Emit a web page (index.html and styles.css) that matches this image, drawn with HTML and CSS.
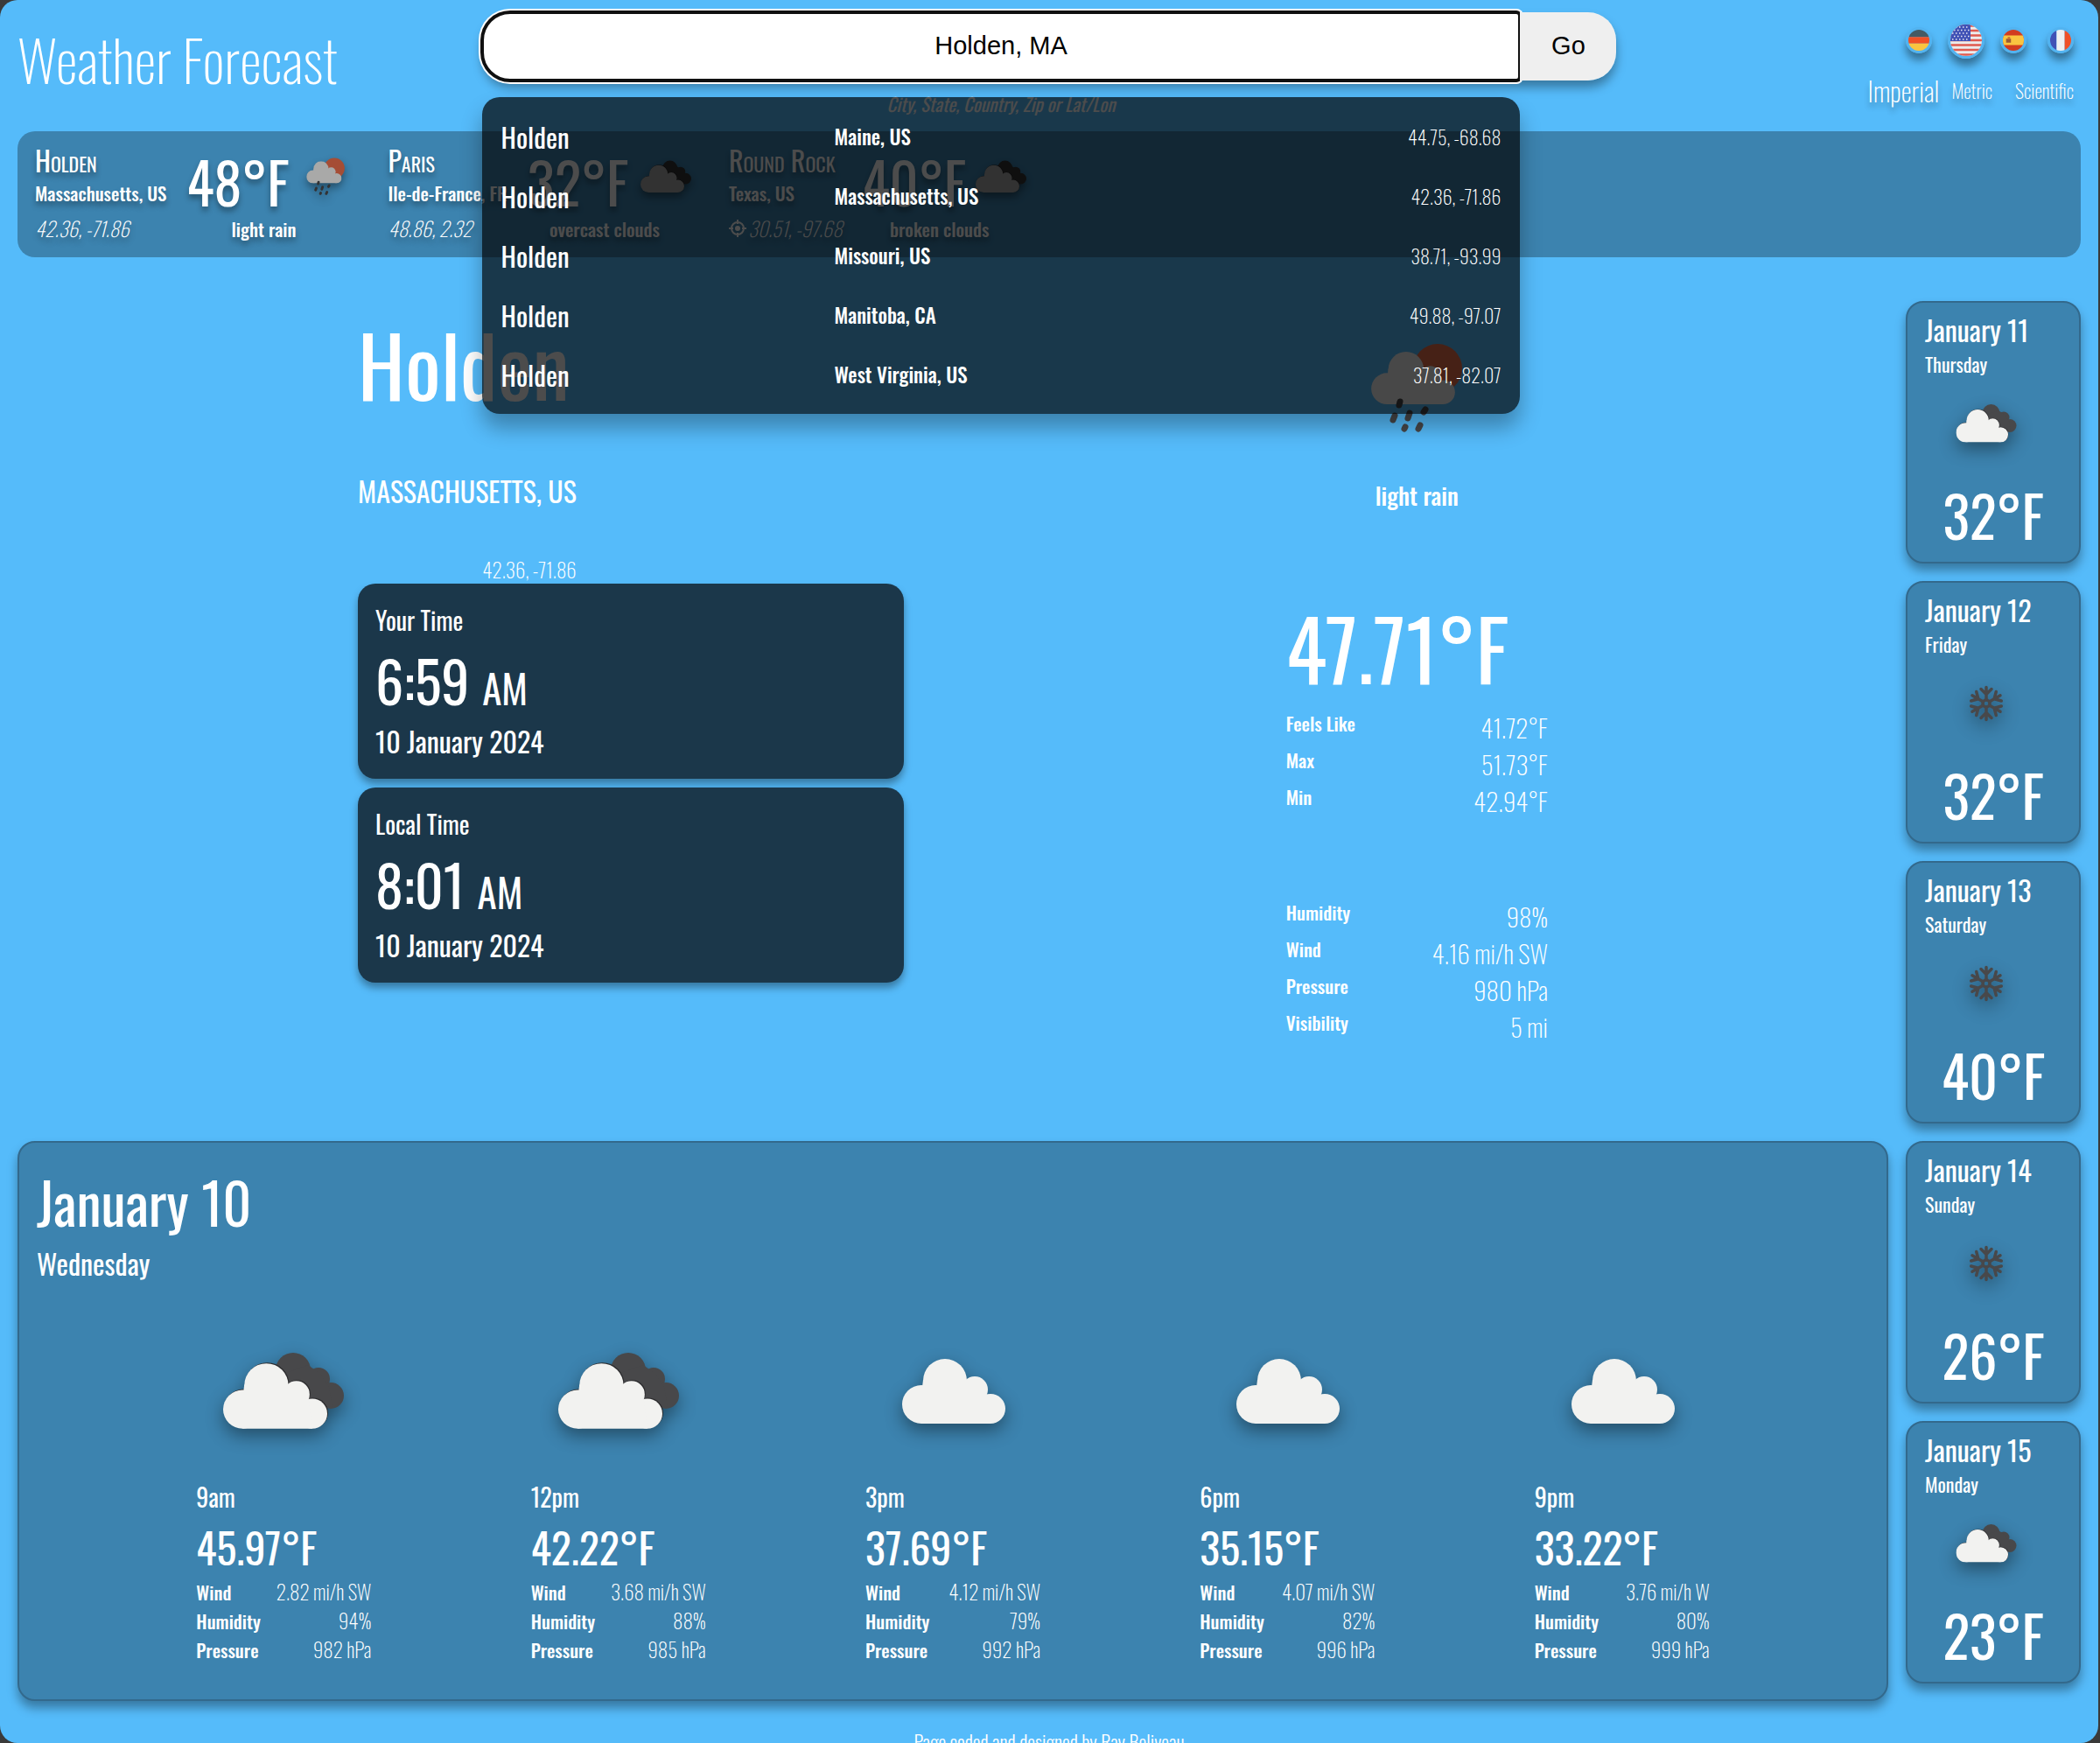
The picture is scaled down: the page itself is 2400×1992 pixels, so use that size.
FILE: index.html
```html
<!DOCTYPE html>
<html lang="en">
<head>
<meta charset="utf-8">
<meta name="viewport" content="width=device-width, initial-scale=1">
<title>Weather Forecast</title>
<link rel="stylesheet" href="styles.css">
</head>
<body>
<svg class="sprite" aria-hidden="true">
  <symbol id="cloud-shape" viewBox="0 0 118 74">
    <circle cx="22" cy="52" r="22"/><circle cx="49" cy="25" r="25"/><circle cx="83" cy="35" r="15"/><circle cx="101" cy="57" r="17"/>
    <path d="M22 74L22 40L24 24L72 24L85 36L97 42L101 74Z"/>
  </symbol>
  <symbol id="clouds" viewBox="0 0 200 200">
    <g fill="#48484a"><circle cx="111" cy="76" r="20"/><circle cx="140" cy="86" r="13"/><circle cx="154" cy="105" r="15"/><path d="M100 80L128 70L142 80L152 95L156 118L120 112Z"/></g>
    <use href="#cloud-shape" x="32" y="67" width="119" height="75" fill="#2c2c2e"/>
    <use href="#cloud-shape" x="31" y="68" width="119" height="75" fill="#f2f2f0"/>
  </symbol>
  <symbol id="cloud" viewBox="0 0 200 200">
    <use href="#cloud-shape" x="42" y="63" width="118" height="74" fill="#f2f2f0"/>
  </symbol>
  <symbol id="rain" viewBox="0 0 200 200">
    <circle cx="124" cy="77" r="28" fill="#ec6e4c"/>
    <use href="#cloud-shape" x="48" y="58" width="96" height="60" fill="#f2f2f0"/>
    <path d="M81 115L80 119M75 131L73 136M92 128L90 134M110 124L108 127M87 144L86 146M104 142L102 146" stroke="#48484a" stroke-width="7" stroke-linecap="round"/>
  </symbol>
  <symbol id="snow" viewBox="0 0 200 200">
    <g stroke="#48484a" stroke-width="7" stroke-linecap="round" fill="none">
      <circle cx="100" cy="100" r="8"/>
      <g id="arm"><path d="M100 91V63M88 67L100 79L112 67"/></g>
      <use href="#arm" transform="rotate(60 100 100)"/><use href="#arm" transform="rotate(120 100 100)"/>
      <use href="#arm" transform="rotate(180 100 100)"/><use href="#arm" transform="rotate(240 100 100)"/>
      <use href="#arm" transform="rotate(300 100 100)"/>
    </g>
  </symbol>
</svg>

<div class="page">
  <header class="header">
    <h1 class="title">Weather Forecast</h1>
    <form class="search" role="search">
      <div class="search-row">
        <input class="search-input" type="text" value="Holden, MA" aria-label="Location">
        <button class="search-button" type="button">Go</button>
      </div>
      <p class="hint">City, State, Country, Zip or Lat/Lon</p>
      <ul class="suggestions">
        <li><button class="suggestion" type="button"><span class="s-name">Holden</span><span class="s-region">Maine, US</span><span class="s-coords">44.75, -68.68</span></button></li>
        <li><button class="suggestion" type="button"><span class="s-name">Holden</span><span class="s-region">Massachusetts, US</span><span class="s-coords">42.36, -71.86</span></button></li>
        <li><button class="suggestion" type="button"><span class="s-name">Holden</span><span class="s-region">Missouri, US</span><span class="s-coords">38.71, -93.99</span></button></li>
        <li><button class="suggestion" type="button"><span class="s-name">Holden</span><span class="s-region">Manitoba, CA</span><span class="s-coords">49.88, -97.07</span></button></li>
        <li><button class="suggestion" type="button"><span class="s-name">Holden</span><span class="s-region">West Virginia, US</span><span class="s-coords">37.81, -82.07</span></button></li>
      </ul>
    </form>
    <div class="settings">
      <div class="flags">
        <button class="flag" type="button" aria-label="Deutsch"><svg viewBox="0 0 26 26"><path fill="#455a64" d="M0 0h26v9H0z"/><path fill="#f05026" d="M0 9h26v8H0z"/><path fill="#f9c440" d="M0 17h26v9H0z"/></svg></button>
        <button class="flag active" type="button" aria-label="English"><svg viewBox="0 0 36 36"><path fill="#ececec" d="M0 0h36v36H0z"/><path stroke="#e05a4f" stroke-width="2.700" d="M0 1.500h36M0 7h36M0 12.500h36M0 18h36M0 23.500h36M0 29h36M0 34.500h36"/><path fill="#4051b5" d="M0 0h23v19H0z"/><path stroke="#e8e8f4" stroke-width="1.500" stroke-dasharray="1.500 2.500" d="M2 3h20M4 6.500h18M2 10h20M4 13.500h18M2 17h20"/></svg></button>
        <button class="flag" type="button" aria-label="Español"><svg viewBox="0 0 26 26"><path fill="#d13c20" d="M0 0h26v26H0z"/><path fill="#f9c440" d="M0 7h26v12H0z"/><path fill="#9a5a35" d="M4 11h6v5H4z"/><path fill="#c9702f" d="M6 9h3v3H6z"/></svg></button>
        <button class="flag" type="button" aria-label="Français"><svg viewBox="0 0 26 26"><path fill="#4051b5" d="M0 0h8v26H0z"/><path fill="#f0f0f0" d="M8 0h10v26H8z"/><path fill="#f05026" d="M18 0h8v26h-8z"/></svg></button>
      </div>
      <div class="units">
        <button class="unit active" type="button">Imperial</button>
        <button class="unit" type="button">Metric</button>
        <button class="unit unit-last" type="button">Scientific</button>
      </div>
    </div>
  </header>

  <section class="history" aria-label="Recent locations">
    <article class="place">
      <div><h2 class="p-name">Holden</h2><p class="p-region">Massachusetts, US</p><p class="p-coords">42.36, -71.86</p></div>
      <div class="p-weather"><span class="p-temp">48°F</span><svg class="p-icon"><use href="#rain"/></svg><span class="p-desc">light rain</span></div>
    </article>
    <article class="place">
      <div><h2 class="p-name">Paris</h2><p class="p-region">Ile-de-France, FR</p><p class="p-coords">48.86, 2.32</p></div>
      <div class="p-weather"><span class="p-temp">32°F</span><svg class="p-icon"><use href="#clouds"/></svg><span class="p-desc">overcast clouds</span></div>
    </article>
    <article class="place">
      <div><h2 class="p-name">Round Rock</h2><p class="p-region">Texas, US</p><p class="p-coords"><svg class="target" viewBox="0 0 20 20"><circle cx="10" cy="10" r="7" fill="none" stroke="#fff" stroke-width="2"/><circle cx="10" cy="10" r="3" fill="#fff"/><path d="M10 0v5M10 15v5M0 10h5M15 10h5" stroke="#fff" stroke-width="2"/></svg>30.51, -97.68</p></div>
      <div class="p-weather"><span class="p-temp">40°F</span><svg class="p-icon"><use href="#clouds"/></svg><span class="p-desc">broken clouds</span></div>
    </article>
  </section>

  <main class="main">
    <div class="primary">
      <section class="current">
        <div class="location">
          <h2 class="city">Holden</h2>
          <div class="locale"><p class="region">MASSACHUSETTS, US</p><p class="coords">42.36, -71.86</p></div>
          <div class="clock"><h3 class="clock-title">Your Time</h3><p class="clock-time">6:59 <span class="meridiem">AM</span></p><p class="clock-date">10 January 2024</p></div>
          <div class="clock"><h3 class="clock-title">Local Time</h3><p class="clock-time">8:01 <span class="meridiem">AM</span></p><p class="clock-date">10 January 2024</p></div>
        </div>
        <div class="conditions">
          <svg class="c-icon"><use href="#rain"/></svg>
          <p class="c-desc">light rain</p>
          <p class="c-temp">47.71°F</p>
          <dl class="stats">
            <div><dt>Feels Like</dt><dd>41.72°F</dd></div>
            <div><dt>Max</dt><dd>51.73°F</dd></div>
            <div><dt>Min</dt><dd>42.94°F</dd></div>
          </dl>
          <dl class="stats">
            <div><dt>Humidity</dt><dd>98%</dd></div>
            <div><dt>Wind</dt><dd>4.16 mi/h SW</dd></div>
            <div><dt>Pressure</dt><dd>980 hPa</dd></div>
            <div><dt>Visibility</dt><dd>5 mi</dd></div>
          </dl>
        </div>
      </section>

      <section class="today">
        <h2 class="today-date">January 10</h2>
        <p class="today-day">Wednesday</p>
        <div class="hours">
          <article class="hour"><svg class="h-icon"><use href="#clouds"/></svg><h3 class="h-time">9am</h3><p class="h-temp">45.97°F</p>
            <dl class="h-stats"><div><dt>Wind</dt><dd>2.82 mi/h SW</dd></div><div><dt>Humidity</dt><dd>94%</dd></div><div><dt>Pressure</dt><dd>982 hPa</dd></div></dl></article>
          <article class="hour"><svg class="h-icon"><use href="#clouds"/></svg><h3 class="h-time">12pm</h3><p class="h-temp">42.22°F</p>
            <dl class="h-stats"><div><dt>Wind</dt><dd>3.68 mi/h SW</dd></div><div><dt>Humidity</dt><dd>88%</dd></div><div><dt>Pressure</dt><dd>985 hPa</dd></div></dl></article>
          <article class="hour"><svg class="h-icon"><use href="#cloud"/></svg><h3 class="h-time">3pm</h3><p class="h-temp">37.69°F</p>
            <dl class="h-stats"><div><dt>Wind</dt><dd>4.12 mi/h SW</dd></div><div><dt>Humidity</dt><dd>79%</dd></div><div><dt>Pressure</dt><dd>992 hPa</dd></div></dl></article>
          <article class="hour"><svg class="h-icon"><use href="#cloud"/></svg><h3 class="h-time">6pm</h3><p class="h-temp">35.15°F</p>
            <dl class="h-stats"><div><dt>Wind</dt><dd>4.07 mi/h SW</dd></div><div><dt>Humidity</dt><dd>82%</dd></div><div><dt>Pressure</dt><dd>996 hPa</dd></div></dl></article>
          <article class="hour"><svg class="h-icon"><use href="#cloud"/></svg><h3 class="h-time">9pm</h3><p class="h-temp">33.22°F</p>
            <dl class="h-stats"><div><dt>Wind</dt><dd>3.76 mi/h W</dd></div><div><dt>Humidity</dt><dd>80%</dd></div><div><dt>Pressure</dt><dd>999 hPa</dd></div></dl></article>
        </div>
      </section>
    </div>

    <aside class="days">
      <article class="day"><h3 class="d-date">January 11</h3><p class="d-name">Thursday</p><svg class="d-icon"><use href="#clouds"/></svg><p class="d-temp">32°F</p></article>
      <article class="day"><h3 class="d-date">January 12</h3><p class="d-name">Friday</p><svg class="d-icon"><use href="#snow"/></svg><p class="d-temp">32°F</p></article>
      <article class="day"><h3 class="d-date">January 13</h3><p class="d-name">Saturday</p><svg class="d-icon"><use href="#snow"/></svg><p class="d-temp">40°F</p></article>
      <article class="day"><h3 class="d-date">January 14</h3><p class="d-name">Sunday</p><svg class="d-icon"><use href="#snow"/></svg><p class="d-temp">26°F</p></article>
      <article class="day"><h3 class="d-date">January 15</h3><p class="d-name">Monday</p><svg class="d-icon"><use href="#clouds"/></svg><p class="d-temp">23°F</p></article>
    </aside>
  </main>

  <footer class="footer">Page coded and designed by Ray Beliveau</footer>
</div>
</body>
</html>
```
FILE: styles.css
```css
:root {
  --sky: #55bbfa;
  --panel: #3c83af;
  --edge: #33698c;
  --night: #1b374a;
}

* { box-sizing: border-box; }

html { background: #3a3a3a; }

body {
  margin: 0;
  color: #fff;
  font-family: Oswald, "Liberation Sans Narrow", "Liberation Sans", sans-serif;
  font-weight: 400;
}

h1, h2, h3, p, ul, dl, dd { margin: 0; padding: 0; font-weight: inherit; }
ul { list-style: none; }
svg { display: block; }
button { font-family: inherit; font-weight: inherit; color: inherit; border: 0; padding: 0; background: none; cursor: pointer; }

.sprite { position: absolute; width: 0; height: 0; }

.page {
  height: 100vh;
  margin-right: 2px;
  padding: 0 20px;
  overflow: hidden;
  border-radius: 20px;
  background: var(--sky);
}

/* Header */
.header {
  display: grid;
  grid-template-columns: 1fr 55% 1fr;
  height: 150px;
}
.title { padding-top: 19px; font-size: 64px; font-weight: 200; line-height: 96px; white-space: nowrap; }

.search { position: relative; padding-top: 14px; }
.search-row {
  display: flex;
  border-radius: 32px;
  box-shadow: 0 8px 12px rgba(0, 0, 0, .35);
}
.search-input {
  flex: 1;
  min-width: 0;
  height: 78px;
  padding: 0 2px 2px;
  border: 2px solid #101010;
  border-radius: 32px 4px 4px 32px;
  box-shadow: 0 0 0 2px #101010, 0 0 0 4px #fff;
  background: #fff;
  color: #000;
  font: 29px "Liberation Sans", Arial, sans-serif;
  text-align: center;
  outline: 0;
}
.search-button {
  width: 110px;
  padding-bottom: 2px;
  border-radius: 0 32px 32px 0;
  background: #efefef;
  color: #000;
  font: 29px "Liberation Sans", Arial, sans-serif;
}
.hint {
  margin: 11px 110px 0 0;
  font-size: 21px;
  line-height: 32px;
  font-style: italic;
  text-align: center;
}
.suggestions {
  position: absolute;
  z-index: 2;
  top: 111px;
  left: 0;
  right: 110px;
  padding: 11px 0;
  border-radius: 20px;
  background: rgba(0, 0, 0, .7);
  box-shadow: 0 16px 24px rgba(0, 0, 0, .3);
}
.suggestion {
  display: grid;
  grid-template-columns: 1fr 1fr 1fr;
  align-items: center;
  width: 100%;
  height: 68px;
  padding: 0 22px;
  text-align: left;
}
.s-name { font-size: 31px; }
.s-region { font-size: 23px; font-weight: 500; }
.s-coords { font-size: 22px; font-weight: 200; text-align: right; }

.settings { display: flex; flex-direction: column; align-items: flex-end; }
.flags { display: flex; align-items: center; gap: 24px; height: 92px; padding-right: 8px; }
.flag {
  width: 30px;
  height: 30px;
  border: 3px solid #52b3f0;
  border-radius: 50%;
  overflow: hidden;
  box-shadow: 0 8px 10px rgba(0, 0, 0, .4);
}
.flag svg { width: 100%; height: 100%; }
.flag.active { width: 42px; height: 42px; margin: 0 -6px; }
.units { display: flex; align-items: center; gap: 14px; height: 22px; padding-right: 8px; }
.unit { font-size: 22px; font-weight: 200; text-shadow: 0 6px 6px rgba(0, 0, 0, .3); }
.unit.active { font-size: 31px; }
.unit-last { margin-left: 12px; }

/* Recent locations */
.history {
  display: flex;
  gap: 30px;
  padding: 10px 20px 8px;
  border-radius: 20px;
  background: var(--panel);
  text-shadow: 0 5px 6px rgba(0, 0, 0, .35);
}
.place { display: flex; gap: 23px; white-space: nowrap; }
.p-name { font-size: 32px; line-height: 46px; font-variant: small-caps; }
.p-region { font-size: 21px; font-weight: 500; line-height: 30px; }
.p-coords { display: flex; align-items: center; font-size: 23px; font-weight: 200; line-height: 50px; font-style: italic; }
.target { width: 20px; height: 20px; margin-right: 2px; }
.p-weather {
  display: grid;
  grid-template-columns: 116px 84px;
  grid-template-rows: 84px 36px;
  align-items: end;
}
.p-temp { font-size: 64px; line-height: 74px; }
.p-icon { width: 84px; height: 84px; filter: brightness(.7) drop-shadow(0 5px 5px rgba(0, 0, 0, .4)); }
.p-desc { grid-column: 1 / 3; padding-right: 24px; font-size: 21px; font-weight: 500; line-height: 36px; text-align: center; }

/* Main area */
.main {
  display: grid;
  grid-template-columns: 1fr 200px;
  gap: 20px;
  align-items: start;
  padding-top: 50px;
}

.current {
  display: flex;
  justify-content: space-between;
  align-items: flex-start;
  padding: 0 18.2% 111px;
}
.location { width: 45.9%; }
.city { font-size: 96px; line-height: 142px; }
.locale { width: fit-content; margin-top: 51px; text-align: right; }
.region { font-size: 32px; line-height: 48px; }
.coords { margin-top: 50px; font-size: 23px; font-weight: 200; line-height: 32px; }
.clock {
  padding: 20px;
  border-radius: 20px;
  background: var(--night);
  box-shadow: 0 6px 8px rgba(0, 0, 0, .35);
}
.clock + .clock { margin-top: 10px; }
.clock-title { font-size: 28px; line-height: 44px; }
.clock-time { font-size: 64px; line-height: 92px; }
.meridiem { font-size: 45px; line-height: 45px; }
.clock-date { font-size: 32px; line-height: 47px; }

.conditions { width: 22%; }
.c-icon { width: 200px; height: 200px; margin: 0 auto; }
.c-desc { font-size: 27px; font-weight: 500; line-height: 44px; text-align: center; }
.c-temp { margin: 91px 0 12px; font-size: 96px; line-height: 120px; }
.stats { display: grid; gap: 2px; }
.stats > div, .h-stats > div { display: flex; justify-content: space-between; }
.stats dt { font-size: 21px; font-weight: 500; line-height: 32px; }
.stats dd { font-size: 29px; font-weight: 200; line-height: 40px; }
.stats + .stats { margin-top: 92px; }

/* Today */
.today, .day {
  border: 2px solid var(--edge);
  border-radius: 20px;
  background: var(--panel);
  box-shadow: 0 8px 12px rgba(0, 0, 0, .35);
}
.today { padding: 20px 20px 40px; }
.today-date { font-size: 64px; line-height: 94px; }
.today-day { font-size: 32px; line-height: 48px; }
.hours { display: flex; justify-content: space-evenly; margin-top: 22px; }
.hour { width: 200px; }
.h-icon { width: 200px; height: 200px; }
.h-icon, .d-icon { filter: drop-shadow(0 8px 10px rgba(0, 0, 0, .4)); }
.h-time { font-size: 28px; line-height: 42px; }
.h-temp { font-size: 48px; line-height: 71px; }
.h-stats { font-size: 21px; font-weight: 500; line-height: 33px; }
.h-stats dd { font-size: 23px; font-weight: 200; }

/* Following days */
.days { display: grid; gap: 20px; }
.day { padding: 10px 20px 2px; }
.d-date { font-size: 32px; line-height: 42px; }
.d-name { font-size: 22px; line-height: 36px; }
.d-icon { width: 100px; height: 100px; margin-left: 20px; }
.d-temp { margin-top: 2px; font-size: 64px; line-height: 104px; text-align: center; }

.footer { padding-top: 30px; font-size: 22px; font-weight: 300; line-height: 32px; text-align: center; }
```
